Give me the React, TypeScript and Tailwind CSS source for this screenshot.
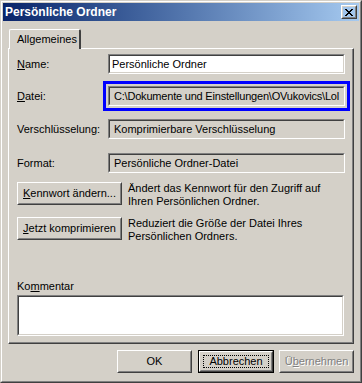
import React from "react";

function Sunken({ children, white, className = "" }: { children?: React.ReactNode; white?: boolean; className?: string }) {
  return (
    <div className={`border border-t-[#808080] border-l-[#808080] border-b-white border-r-white ${className}`}>
      <div className={`h-full border border-t-[#404040] border-l-[#404040] border-b-[#d4d0c8] border-r-[#d4d0c8] ${white ? "bg-white" : "bg-[#d4d0c8]"} overflow-hidden whitespace-nowrap flex items-center pl-[2px]`}>
        {children}
      </div>
    </div>
  );
}

function Raised({ children, className = "" }: { children?: React.ReactNode; className?: string }) {
  return (
    <div className={`border border-t-white border-l-white border-b-[#404040] border-r-[#404040] ${className}`}>
      <div className="h-full border border-t-[#d4d0c8] border-l-[#d4d0c8] border-b-[#808080] border-r-[#808080] flex items-center justify-center whitespace-nowrap">
        {children}
      </div>
    </div>
  );
}

export default function App() {
  return (
    <div className="w-[362px] h-[383px] bg-[#d4d0c8] font-['Liberation_Sans',Arial,sans-serif] text-[11px] text-black leading-[13px]">
      <div className="w-full h-full border border-t-[#d4d0c8] border-l-[#d4d0c8] border-b-[#404040] border-r-[#404040]">
        <div className="w-full h-full border border-t-white border-l-white border-b-[#808080] border-r-[#808080] p-px flex flex-col">
          {/* Title bar */}
          <div className="h-[18px] bg-gradient-to-r from-[#0a246a] to-[#a6caf0] flex items-center justify-between pl-[2px] pr-[2px] shrink-0">
            <span className="text-white font-bold text-[12px]">Persönliche Ordner</span>
            <Raised className="w-[16px] h-[14px]">
              <svg width="8" height="7" viewBox="0 0 8 7" className="block">
                <path d="M0 0h2v1h1v1h2V1h1V0h2v1H7v1H6v1H5v1h1v1h1v1h1v1H6V6H5V5H3v1H2v1H0V6h1V5h1V4h1V3H2V2H1V1H0z" fill="#000" />
              </svg>
            </Raised>
          </div>

          {/* Body */}
          <div className="flex-1 flex flex-col px-[5px]">
            {/* Tab strip */}
            <div className="h-[27px] flex items-end pl-px shrink-0">
              <div className="w-[72px] h-[20px] border-t border-l border-t-white border-l-white border-r-2 border-r-[#404040] rounded-tl-[2px] rounded-tr-[2px] flex items-center pl-[7px] -mb-px relative z-10 bg-[#d4d0c8]">
                Allgemeines
              </div>
            </div>
            {/* Panel */}
            <div className="h-[296px] border-t border-l border-t-white border-l-white border-b border-r border-b-[#404040] border-r-[#404040] shrink-0">
              <div className="h-full border-b border-r border-b-[#808080] border-r-[#808080] flex flex-col pl-[8px]">
                <div className="flex items-center mt-[5px] h-[20px]">
                  <span className="w-[91px]"><span className="underline">N</span>ame:</span>
                  <Sunken white className="w-[237px] h-[20px]">Persönliche Ordner</Sunken>
                </div>
                <div className="flex items-center mt-[7px]">
                  <span className="w-[86px]"><span className="underline">D</span>atei:</span>
                  <div className="border-[3px] border-[#0000ff] p-[2px]">
                    <Sunken className="w-[237px] h-[20px]">
                      <span className="pl-[2px] tracking-[-0.2px]">C:\Dokumente und Einstellungen\OVukovics\Lol</span>
                    </Sunken>
                  </div>
                </div>
                <div className="flex items-center mt-[8px] h-[20px]">
                  <span className="w-[91px]">Verschlüsselung:</span>
                  <Sunken className="w-[237px] h-[20px]"><span className="pl-[2px]">Komprimierbare Verschlüsselung</span></Sunken>
                </div>
                <div className="flex items-center mt-[14px] h-[20px]">
                  <span className="w-[91px]">Format:</span>
                  <Sunken className="w-[237px] h-[20px]"><span className="pl-[2px]">Persönliche Ordner-Datei</span></Sunken>
                </div>
                <div className="flex items-start mt-[9px] gap-[6px]">
                  <Raised className="w-[105px] h-[23px]"><span><span className="underline">K</span>ennwort ändern...</span></Raised>
                  <div className="leading-[13px]">Ändert das Kennwort für den Zugriff auf<br />Ihren Persönlichen Ordner.</div>
                </div>
                <div className="flex items-start mt-[9px] gap-[6px]">
                  <Raised className="w-[105px] h-[23px]"><span><span className="underline">J</span>etzt komprimieren</span></Raised>
                  <div className="leading-[13px]">Reduziert die Größe der Datei Ihres<br />Persönlichen Ordners.</div>
                </div>
                <div className="mt-[37px] h-[13px]">Ko<span className="underline">m</span>mentar</div>
                <Sunken white className="w-[327px] h-[41px] mt-[2px]" />
              </div>
            </div>
            {/* Buttons */}
            <div className="flex justify-end mt-[6px]">
              <Raised className="w-[75px] h-[23px]">OK</Raised>
              <div className="w-[76px] h-[23px] border border-black ml-[6px]">
                <Raised className="w-full h-full">
                  <div className="w-full h-full p-[2px]">
                    <div className="w-full h-full border border-dotted border-black flex items-center justify-center">Abbrechen</div>
                  </div>
                </Raised>
              </div>
              <Raised className="w-[75px] h-[23px] ml-[5px]">
                <span className="text-[#808080] [text-shadow:1px_1px_0_#ffffff]">Ü<span className="underline">b</span>ernehmen</span>
              </Raised>
            </div>
          </div>
        </div>
      </div>
    </div>
  );
}
